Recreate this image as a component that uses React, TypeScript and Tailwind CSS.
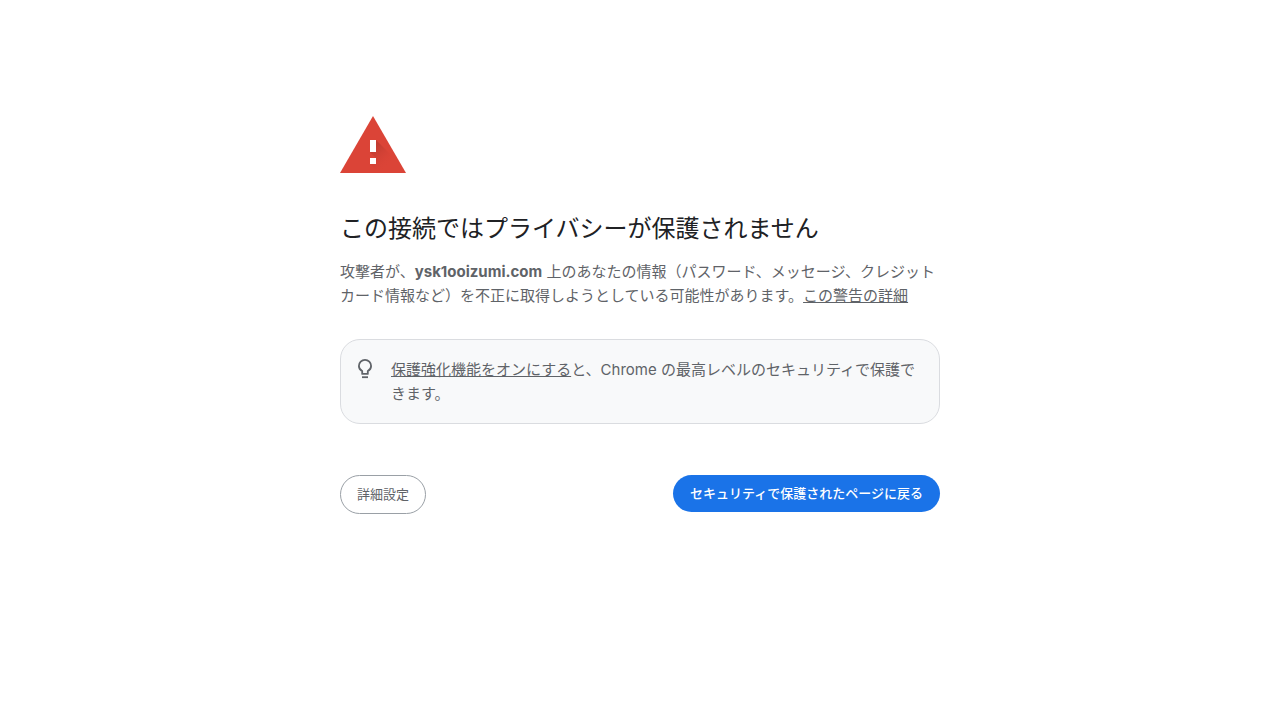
function WarningIcon() {
  return (
    <svg viewBox="0 0 66 57" className="h-[57px] w-[66px]" aria-hidden="true">
      <defs>
        <linearGradient id="mark-shadow" x1="32" y1="34" x2="48" y2="50" gradientUnits="userSpaceOnUse">
          <stop offset="0" stopColor="#a8332a" stopOpacity="0.5" />
          <stop offset="1" stopColor="#db4437" stopOpacity="0" />
        </linearGradient>
      </defs>
      <path d="M33 0 66 57H0z" fill="#db4437" />
      <path d="M36 24 54.5 42.5 62.9 57H39L30 48l6-6-6-6z" fill="url(#mark-shadow)" />
      <path d="M30 24h6v12h-6zM30 42h6v6h-6z" fill="#fff" />
    </svg>
  )
}

function BulbIcon() {
  return (
    <svg viewBox="0 0 24 24" className="size-6 shrink-0" fill="none" stroke="#5f6368" strokeWidth="1.8" aria-hidden="true">
      <path d="M9.2 15.9v-2.8C7.2 12 5.9 10.2 5.9 8a6.1 6.1 0 0 1 12.2 0c0 2.2-1.3 4-3.3 5.1v2.8z" strokeLinejoin="round" />
      <path d="M9 19.2h6" />
    </svg>
  )
}

function App() {
  return (
    <main className="mx-auto max-w-[600px] pt-[116px] font-[Inter,'Noto_Sans_CJK_JP',sans-serif] text-[15px] leading-6 text-[#5f6368]">
      <WarningIcon />

      <h1 className="mt-[41px] text-2xl leading-[30px] text-[#202124]">
        この接続ではプライバシーが保護されません
      </h1>

      <p className="mt-4">
        攻撃者が、<strong className="font-bold">ysk1ooizumi.com</strong> 上のあなたの情報（パスワード、メッセージ、クレジットカード情報など）を不正に取得しようとしている可能性があります。<a href="#learn-more" className="underline">この警告の詳細</a>
      </p>

      {/* Enhanced protection hint */}
      <div className="mt-[31px] flex gap-[14px] rounded-[20px] border border-[#dadce0] bg-[#f8f9fa] pt-[18px] pr-5 pb-[17px] pl-3">
        <BulbIcon />
        <p>
          <a href="#enhanced-protection" className="underline">保護強化機能をオンにする</a>と、Chrome の最高レベルのセキュリティで保護できます。
        </p>
      </div>

      <div className="mt-[51px] flex items-start justify-between text-[13px] leading-[21px]">
        <button type="button" className="rounded-full border border-[#9aa0a6] px-4 py-2">
          詳細設定
        </button>
        <button type="button" className="rounded-full bg-[#1a73e8] px-[17px] py-2 font-medium text-white">
          セキュリティで保護されたページに戻る
        </button>
      </div>
    </main>
  )
}

export default App
